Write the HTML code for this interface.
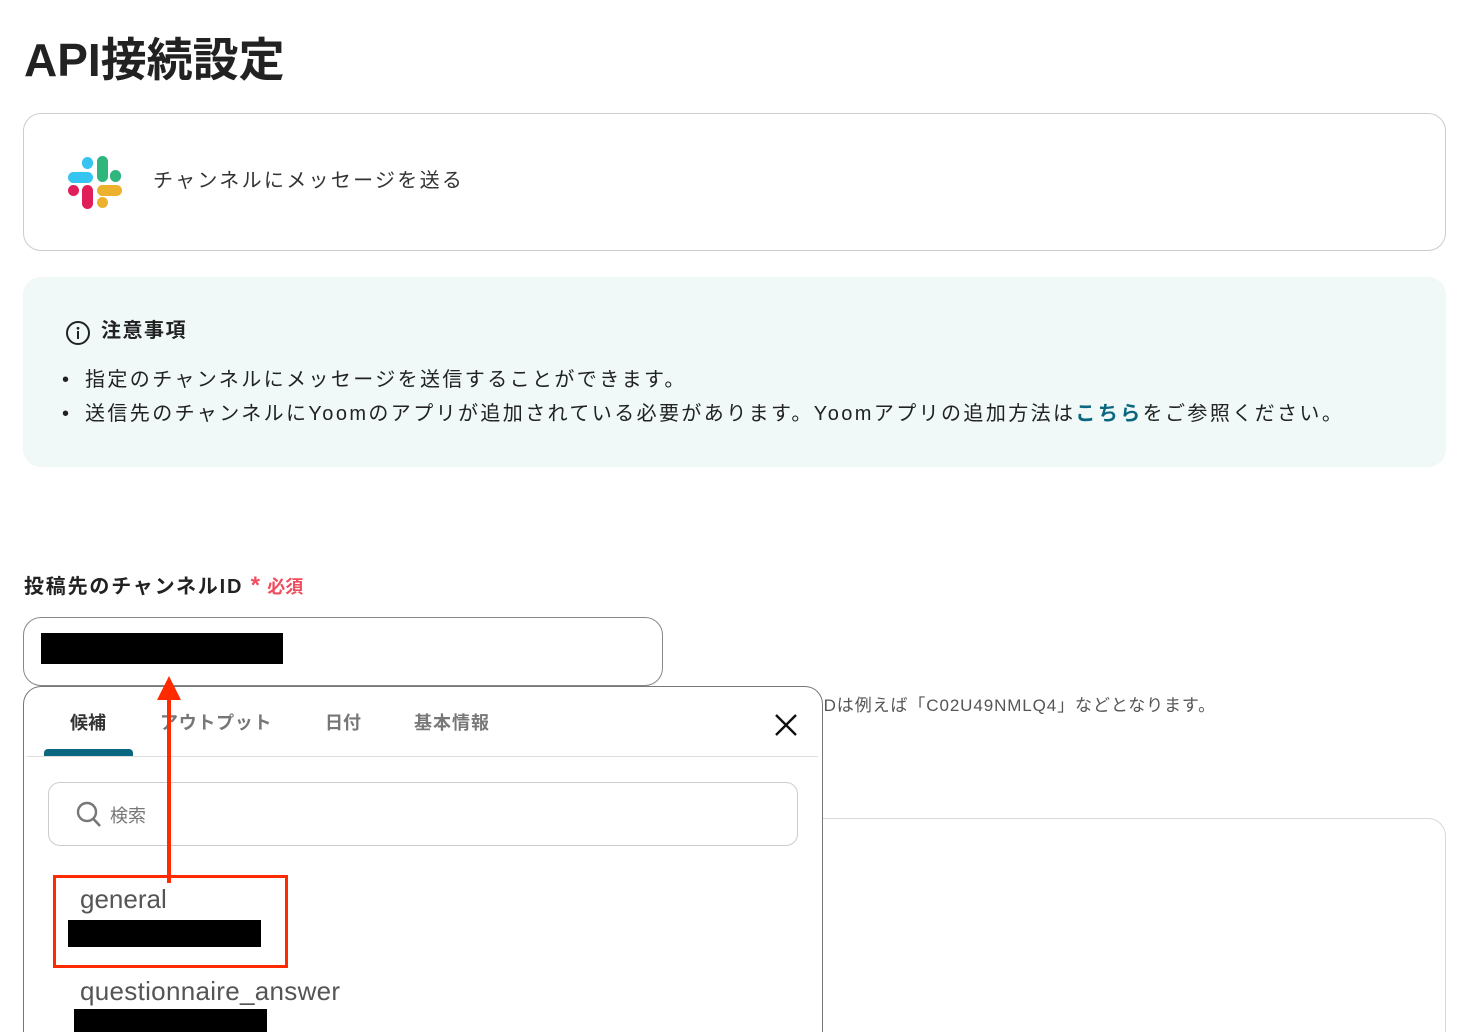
<!DOCTYPE html>
<html><head><meta charset="utf-8">
<style>
*{margin:0;padding:0;box-sizing:border-box}
html,body{width:1468px;height:1032px;overflow:hidden}
body{background:#fff;font-family:"Liberation Sans","Noto Sans CJK JP",sans-serif;color:#222}
#wrap{position:relative;width:1468px;height:1032px;overflow:hidden}
.abs{position:absolute}
</style></head><body><div id="wrap">
<div class="abs" style="left:24px;top:30px;font-size:46px;font-weight:bold;color:#222;line-height:60px">API接続設定</div>

<div class="abs" style="left:23px;top:113px;width:1423px;height:138px;border:1px solid #ccc;border-radius:18px"></div>
<svg class="abs" style="left:68px;top:155px" width="54" height="54" viewBox="0 0 54 54">
<rect x="14" y="2" width="11" height="12" rx="5.5" fill="#36c5f0"/>
<rect x="0" y="17" width="25" height="11" rx="5.5" fill="#36c5f0"/>
<rect x="29" y="1" width="11" height="26" rx="5.5" fill="#2eb67d"/>
<rect x="42" y="15" width="11" height="12" rx="5.5" fill="#2eb67d"/>
<rect x="14" y="30" width="11" height="24" rx="5.5" fill="#e01e5a"/>
<rect x="0" y="30" width="11" height="11" rx="5.5" fill="#e01e5a"/>
<rect x="29" y="30" width="25" height="11" rx="5.5" fill="#ecb22e"/>
<rect x="29" y="42" width="11" height="11" rx="5.5" fill="#ecb22e"/>
</svg>
<div class="abs" style="left:153px;top:167px;font-size:20px;line-height:28px;color:#333;letter-spacing:2.3px">チャンネルにメッセージを送る</div>

<div class="abs" style="left:23px;top:277px;width:1423px;height:190px;background:#f0f8f8;border-radius:18px"></div>
<svg class="abs" style="left:65px;top:320px" width="26" height="26" viewBox="0 0 26 26"><circle cx="13" cy="13" r="11" fill="none" stroke="#222" stroke-width="2"/><circle cx="13" cy="8.3" r="1.4" fill="#222"/><rect x="12" y="11" width="2" height="8" fill="#222"/></svg>
<div class="abs" style="left:101px;top:317px;font-size:20px;font-weight:bold;line-height:28px;letter-spacing:1.5px">注意事項</div>
<div class="abs" style="left:62px;top:363px;font-size:20px;line-height:34px;color:#222;letter-spacing:2.4px">
<div><span style="display:inline-block;width:23px;letter-spacing:0">•</span>指定のチャンネルにメッセージを送信することができます。</div>
<div><span style="display:inline-block;width:23px;letter-spacing:0">•</span>送信先のチャンネルにYoomのアプリが追加されている必要があります。Yoomアプリの追加方法は<b style="color:#0b6680">こちら</b>をご参照ください。</div>
</div>

<div class="abs" style="left:24px;top:571px;font-size:20px;font-weight:bold;line-height:30px;color:#222;letter-spacing:1.8px">投稿先のチャンネルID <span style="color:#f04e5e;font-size:24px;letter-spacing:0">*</span> <span style="color:#f04e5e;font-size:18px;letter-spacing:0">必須</span></div>
<div class="abs" style="left:23px;top:617px;width:640px;height:69px;border:1px solid #888;border-radius:18px"></div>
<div class="abs" style="left:41px;top:633px;width:242px;height:31px;background:#000"></div>

<div class="abs" style="left:818px;top:694px;font-size:17px;line-height:24px;color:#555;letter-spacing:0.9px">IDは例えば「C02U49NMLQ4」などとなります。</div>
<div class="abs" style="left:700px;top:818px;width:746px;height:214px;border:1px solid #d8d8dc;border-bottom:none;border-radius:18px 18px 0 0"></div>

<div class="abs" style="left:23px;top:686px;width:800px;height:346px;background:#fff;border:1px solid #777;border-bottom:none;border-radius:18px 18px 0 0"></div>
<div class="abs" style="left:70px;top:710px;font-size:18px;font-weight:bold;line-height:26px;color:#333">候補</div>
<div class="abs" style="left:160px;top:710px;font-size:18px;font-weight:bold;line-height:26px;color:#777;letter-spacing:0.7px">アウトプット</div>
<div class="abs" style="left:325px;top:710px;font-size:18px;font-weight:bold;line-height:26px;color:#777">日付</div>
<div class="abs" style="left:414px;top:710px;font-size:18px;font-weight:bold;line-height:26px;color:#777;letter-spacing:1px">基本情報</div>
<div class="abs" style="left:44px;top:749px;width:89px;height:8px;background:#0b6680;border-radius:4px 4px 0 0"></div>
<div class="abs" style="left:27px;top:756px;width:791px;height:1px;background:#ddd"></div>
<svg class="abs" style="left:774px;top:713px" width="24" height="24" viewBox="0 0 24 24"><path d="M2 2L22 22M22 2L2 22" stroke="#111" stroke-width="2.4"/></svg>
<div class="abs" style="left:48px;top:782px;width:750px;height:64px;border:1px solid #ccc;border-radius:12px"></div>
<svg class="abs" style="left:76px;top:801px" width="26" height="28" viewBox="0 0 26 28"><circle cx="11" cy="11" r="9" fill="none" stroke="#777" stroke-width="2.4"/><path d="M17.5 18L24 25" stroke="#777" stroke-width="2.6"/></svg>
<div class="abs" style="left:110px;top:803px;font-size:18px;line-height:26px;color:#777">検索</div>

<div class="abs" style="left:80px;top:883px;font-size:26px;line-height:32px;color:#555">general</div>
<div class="abs" style="left:68px;top:920px;width:193px;height:27px;background:#000"></div>
<div class="abs" style="left:53px;top:875px;width:235px;height:93px;border:3px solid #ff2a00"></div>
<div class="abs" style="left:80px;top:975px;font-size:26px;line-height:32px;color:#555;letter-spacing:0.3px">questionnaire_answer</div>
<div class="abs" style="left:74px;top:1009px;width:193px;height:23px;background:#000"></div>

<svg class="abs" style="left:150px;top:670px" width="40" height="215" viewBox="0 0 40 215"><path d="M19 6L31 30L7 30Z" fill="#ff2a00"/><rect x="17" y="28" width="4" height="185" fill="#ff2a00"/></svg>
</div></body></html>
